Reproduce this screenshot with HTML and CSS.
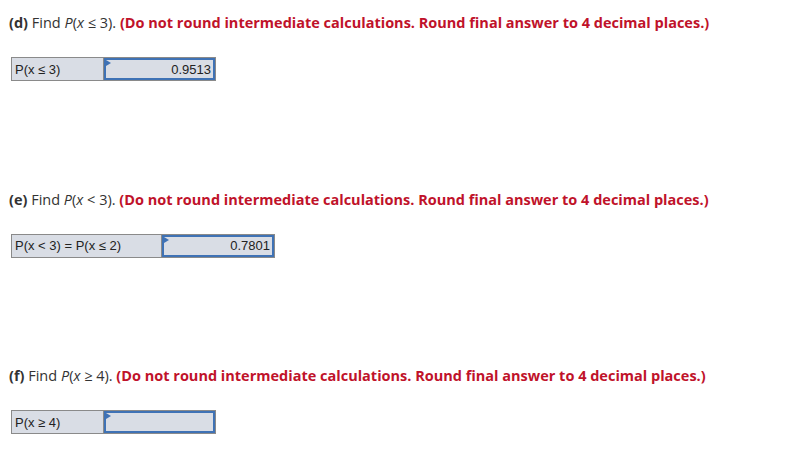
FILE: index.html
```html
<!DOCTYPE html>
<html>
<head>
<meta charset="utf-8">
<link rel="stylesheet" href="styles.css">
</head>
<body>
<div class="page">
  <section class="part">
    <p class="q"><b>(d)</b> Find <i>P</i>(<i>x</i> ≤ 3). <span class="note">(Do not round intermediate calculations. Round final answer to 4 decimal places.)</span></p>
    <div class="tbl">
      <div class="lbl w1">P(x ≤ 3)</div>
      <div class="ans"><span class="flag"></span>0.9513</div>
    </div>
  </section>
  <section class="part">
    <p class="q"><b>(e)</b> Find <i>P</i>(<i>x</i> &lt; 3). <span class="note">(Do not round intermediate calculations. Round final answer to 4 decimal places.)</span></p>
    <div class="tbl">
      <div class="lbl w2">P(x &lt; 3) = P(x ≤ 2)</div>
      <div class="ans"><span class="flag"></span>0.7801</div>
    </div>
  </section>
  <section class="part">
    <p class="q"><b>(f)</b> Find <i>P</i>(<i>x</i> ≥ 4). <span class="note">(Do not round intermediate calculations. Round final answer to 4 decimal places.)</span></p>
    <div class="tbl">
      <div class="lbl w1">P(x ≥ 4)</div>
      <div class="ans"><span class="flag"></span></div>
    </div>
  </section>
</div>
</body>
</html>
```
FILE: styles.css
```css
html, body { margin: 0; padding: 0; background: #fff; }
.page {
  padding: 13px 0 0 9px;
  display: flex;
  flex-direction: column;
  gap: 108.5px;
}
.part { display: flex; flex-direction: column; gap: 24px; }
.q {
  margin: 0;
  font-family: "Open Sans", sans-serif;
  font-size: 14.5px;
  line-height: 20px;
  color: #333;
}
.q b { font-weight: 700; }
.note { color: #c0122a; font-weight: 700; }
.tbl {
  display: flex;
  margin-left: 2px;
  height: 22px;
  border: 1px solid #8a8a8a;
  align-self: flex-start;
  background: #d9dde5;
  font-family: "Liberation Sans", Arial, sans-serif;
  font-size: 13px;
  color: #222;
}
.lbl {
  display: flex;
  align-items: center;
  padding-left: 3px;
  border-right: 1px solid #8a8a8a;
  box-sizing: border-box;
}
.w1 { width: 92px; }
.w2 { width: 150px; }
.ans {
  position: relative;
  width: 111px;
  box-sizing: border-box;
  border: 2px solid #3f72b5;
  display: flex;
  align-items: center;
  justify-content: flex-end;
  padding-right: 2px;
}
.w2 + .ans { width: 112px; }
.flag {
  position: absolute;
  left: 0;
  top: 0;
  width: 0;
  height: 0;
  border-top: 3px solid transparent;
  border-bottom: 3px solid transparent;
  border-left: 5px solid #3f72b5;
}
```
